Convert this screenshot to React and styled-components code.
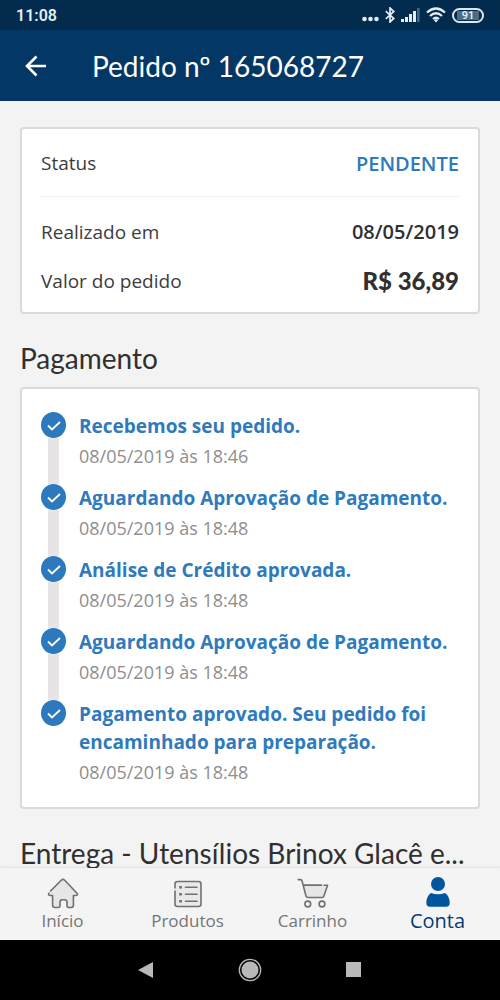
import React, { useState } from 'react';
import styled, { createGlobalStyle } from 'styled-components';

const GlobalStyle = createGlobalStyle`
  * {
    box-sizing: border-box;
  }
  body {
    margin: 0;
    background: #f3f3f3;
    color: #3c3c3c;
    font-family: 'Open Sans', 'Noto Sans', sans-serif;
  }
  h1, h2, p, ol, dl, dd {
    margin: 0;
    padding: 0;
  }
  button {
    border: 0;
    padding: 0;
    background: none;
    display: flex;
    cursor: pointer;
  }
  svg {
    display: block;
  }
`;
const Screen = styled.div`
  display: flex;
  flex-direction: column;
  height: 100vh;
`;
const StatusBar = styled.div`
  display: flex;
  align-items: center;
  justify-content: space-between;
  height: 30px;
  padding: 0 16px;
  background: #022b4d;
  color: #e4edf5;
  font-family: Roboto, sans-serif;
  font-size: 16px;
  font-weight: 600;
`;
const StatusIcons = styled.div`
  display: flex;
  align-items: center;
  gap: 6px;
`;
const Battery = styled.div`
  display: flex;
  width: 32px;
  height: 15px;
  padding: 1px;
  border: 2px solid #dbe6ef;
  border-radius: 8px;
  span {
    flex: 1;
    margin: 0 2px;
    background: #4f6c85;
    font-size: 11px;
    line-height: 10px;
    text-align: center;
  }
`;
const Header = styled.header`
  display: flex;
  align-items: center;
  gap: 44px;
  height: 71px;
  padding: 0 24px;
  background: #033866;
  color: #fff;
  flex-shrink: 0;
`;
const Title = styled.h1`
  font-family: Lato, sans-serif;
  font-size: 28px;
  line-height: 40px;
  font-weight: 400;
`;
const Content = styled.main`
  flex: 1;
  min-height: 0;
  padding: 26px 20px 0;
  overflow-y: auto;
  scrollbar-width: none;
`;
const Card = styled.section`
  padding: 23px 19px 22px;
  background: #fff;
  border: 2px solid #dadada;
  border-radius: 4px;
`;
const Summary = styled(Card)`
  padding: 9px 19px 7px;
`;
const Row = styled.div`
  display: flex;
  align-items: center;
  justify-content: space-between;
  height: 49px;
  font-size: 19px;
`;
const StatusRow = styled(Row)`
  height: 59px;
  padding-bottom: 8px;
  margin-bottom: 10px;
  border-bottom: 1px solid #eee;
`;
const Value = styled.dd`
  color: #303030;
  font-size: 20px;
  font-weight: 600;
`;
const StatusValue = styled(Value)`
  color: #2e7abd;
`;
const Price = styled(Value)`
  font-family: Lato, sans-serif;
  font-size: 24px;
  font-weight: 900;
`;
const SectionTitle = styled.h2`
  padding: 24px 0 9px;
  overflow: hidden;
  color: #303030;
  font-family: Lato, sans-serif;
  font-size: 28px;
  line-height: 40px;
  font-weight: 400;
  white-space: nowrap;
  text-overflow: ellipsis;
`;
const Steps = styled.ol`
  list-style: none;
`;
const Step = styled.li`
  display: flex;
  gap: 13px;
`;
const Marker = styled.div`
  display: flex;
  flex-direction: column;
  align-items: center;
  flex-shrink: 0;
  width: 25px;
`;
const Dot = styled.span`
  display: flex;
  align-items: center;
  justify-content: center;
  width: 25px;
  height: 26px;
  border-radius: 50%;
  background: #2c79be;
`;
const Line = styled.span`
  flex: 1;
  width: 11px;
  background: #e6e4e4;
`;
const StepText = styled.div`
  padding-bottom: ${props => (props.$last ? '0' : '15px')};
`;
const StepTitle = styled.p`
  color: #2e7abd;
  font-size: 19px;
  line-height: 28px;
  font-weight: 700;
`;
const StepDate = styled.p`
  margin-top: 3px;
  color: #8e8e8e;
  font-size: 18px;
  line-height: 26px;
`;
const Tabs = styled.nav`
  display: grid;
  grid-template-columns: repeat(4, 1fr);
  height: 72px;
  flex-shrink: 0;
  background: #f4f4f4;
  box-shadow: 0 -1px 2px rgba(0, 0, 0, 0.08);
`;
const Tab = styled.a`
  display: flex;
  flex-direction: column;
  align-items: center;
  justify-content: flex-end;
  padding-bottom: 7px;
  color: ${props => (props.$active ? '#033c72' : '#757575')};
  font-size: ${props => (props.$active ? '20px' : '17px')};
  line-height: 24px;
  text-decoration: none;
`;
const SystemBar = styled.div`
  display: flex;
  align-items: center;
  justify-content: center;
  gap: 84px;
  height: 60px;
  flex-shrink: 0;
  background: #000;
`;

const HomeIcon = () => (
  <svg width='32' height='32' viewBox='0 0 32 32' fill='#e6e6e6' stroke='#707070' strokeWidth='1.6' strokeLinecap='round' strokeLinejoin='round'>
    <path d='M3.500 14 14.500 3q1.500-1.400 3 0L30 16.200q1.400 2-1 2.300h-2.600v9.800q0 2.200-2.200 2.200h-2.400q-1.800 0-1.800-2v-3.300q0-2.400-2.400-2.400h-2.200q-2.400 0-2.400 2.400v3.300q0 2-1.800 2H7.800q-2.200 0-2.200-2.200v-9.800H3q-2.400-.3-1-2.300' />
  </svg>
);
const ListIcon = () => (
  <svg width='32' height='32' viewBox='0 0 32 32' fill='none' stroke='#707070' strokeWidth='1.6' strokeLinecap='round'>
    <path fill='#e9e9e9' d='M3 11V7q0-2.500 2.500-2.500h21Q29 4.500 29 7v20q0 2.500-2.500 2.500h-21Q3 29.500 3 27V14' />
    <path d='M13.500 10.200H25M13.500 17.200H25M13.500 24.200H25' />
    <path strokeWidth='2.600' strokeLinecap='square' d='M8.500 10.200h.1M8.500 17.200h.1M8.500 24.200h.1' />
  </svg>
);
const CartIcon = () => (
  <svg width='32' height='32' viewBox='0 0 32 32' fill='none' stroke='#707070' strokeWidth='1.6' strokeLinecap='round' strokeLinejoin='round'>
    <path fill='#e6e6e6' stroke='none' d='M6 8h24l-3.500 12H9z' />
    <path d='M1.200 2.600h2.300q1.200 0 1.500 1.200l4 15.200q.4 1.500 2 1.500h14.300q1.200 0 1.500-1.200l3.800-11.100h-3.500M6.500 8.100h18' />
    <circle cx='10.800' cy='27' r='2.900' />
    <circle cx='25' cy='27' r='2.900' />
  </svg>
);
const UserIcon = () => (
  <svg width='32' height='32' viewBox='0 0 32 32' fill='#02549f'>
    <circle cx='16' cy='7' r='7' />
    <path d='M9 15.900q7 2.700 14 0 4.700 3.300 4.700 10.100 0 3.700-3.500 3.700H7.800q-3.500 0-3.500-3.700 0-6.800 4.700-10.100' />
  </svg>
);

const steps = [
  { title: 'Recebemos seu pedido.', date: '08/05/2019 às 18:46' },
  { title: 'Aguardando Aprovação de Pagamento.', date: '08/05/2019 às 18:48' },
  { title: 'Análise de Crédito aprovada.', date: '08/05/2019 às 18:48' },
  { title: 'Aguardando Aprovação de Pagamento.', date: '08/05/2019 às 18:48' },
  { title: 'Pagamento aprovado. Seu pedido foi encaminhado para preparação.', date: '08/05/2019 às 18:48' },
];
const tabs = [
  { id: 'inicio', label: 'Início', Icon: HomeIcon },
  { id: 'produtos', label: 'Produtos', Icon: ListIcon },
  { id: 'carrinho', label: 'Carrinho', Icon: CartIcon },
  { id: 'conta', label: 'Conta', Icon: UserIcon },
];

const App = () => {
  const [activeTab, setActiveTab] = useState('conta');
  return (
    <Screen>
      <GlobalStyle />
      <StatusBar>
        <span>11:08</span>
        <StatusIcons>
          <svg width='17' height='16' viewBox='0 0 17 16' fill='#e4edf5'>
            <circle cx='2.500' cy='12' r='2.300' />
            <circle cx='8.500' cy='12' r='2.300' />
            <circle cx='14.500' cy='12' r='2.300' />
          </svg>
          <svg width='10' height='16' viewBox='0 0 10 16' fill='none' stroke='#e4edf5' strokeWidth='1.700'>
            <path d='M.8 4.200 8.800 11.500 5 15V1l3.800 3.500-8 7.300' />
          </svg>
          <svg width='19' height='14' viewBox='0 0 19 14' fill='#e4edf5'>
            <path d='M0 11h3v3H0zM4 9h3v5H4zM8 6h3v8H8zM12 3h3v11h-3z' />
            <path fill='#47667f' d='M16 0h2.600v14H16z' />
          </svg>
          <svg width='20' height='16' viewBox='0 0 20 16' fill='none' stroke='#e4edf5' strokeWidth='2.300'>
            <path d='M1 5.500q9-8 18 0M4 9q6-5.400 12 0M7 12q3-2.600 6 0' />
            <path fill='#e4edf5' stroke='none' d='m7.800 13 2.200 2.500 2.200-2.500q-2.200-1.600-4.400 0' />
          </svg>
          <Battery>
            <span>91</span>
          </Battery>
        </StatusIcons>
      </StatusBar>
      <Header>
        <button aria-label='Voltar'>
          <svg width='24' height='24' viewBox='0 0 24 24' fill='none' stroke='#fff' strokeWidth='2.600'>
            <path d='M22 12H3.500M12.500 2.500 3 12l9.500 9.500' />
          </svg>
        </button>
        <Title>Pedido nº 165068727</Title>
      </Header>
      <Content>
        <Summary as='dl'>
          <StatusRow>
            <dt>Status</dt>
            <StatusValue>PENDENTE</StatusValue>
          </StatusRow>
          <Row>
            <dt>Realizado em</dt>
            <Value>08/05/2019</Value>
          </Row>
          <Row>
            <dt>Valor do pedido</dt>
            <Price>R$ 36,89</Price>
          </Row>
        </Summary>
        <SectionTitle>Pagamento</SectionTitle>
        <Card>
          <Steps>
            {steps.map((step, i) => (
              <Step key={i}>
                <Marker>
                  <Dot>
                    <svg width='14' height='12' viewBox='0 0 14 12' fill='none' stroke='#fff' strokeWidth='1.800'>
                      <path d='m1 6.500 4 4L13 3' />
                    </svg>
                  </Dot>
                  {i < steps.length - 1 && <Line />}
                </Marker>
                <StepText $last={i === steps.length - 1}>
                  <StepTitle>{step.title}</StepTitle>
                  <StepDate>{step.date}</StepDate>
                </StepText>
              </Step>
            ))}
          </Steps>
        </Card>
        <SectionTitle>Entrega - Utensílios Brinox Glacê e...</SectionTitle>
      </Content>
      <Tabs>
        {tabs.map(({ id, label, Icon }) => (
          <Tab key={id} href={`#${id}`} $active={activeTab === id} onClick={() => setActiveTab(id)}>
            <Icon />
            {label}
          </Tab>
        ))}
      </Tabs>
      <SystemBar>
        <button aria-label='Voltar'>
          <svg width='16' height='18' viewBox='0 0 16 18' fill='#b9b9b9'>
            <path d='M0 9 15 1v16z' />
          </svg>
        </button>
        <button aria-label='Tela inicial'>
          <svg width='24' height='24' viewBox='0 0 24 24' fill='#b9b9b9'>
            <circle cx='12' cy='12' r='8.500' />
            <circle cx='12' cy='12' r='10.700' fill='none' stroke='#b9b9b9' strokeWidth='1.300' />
          </svg>
        </button>
        <button aria-label='Recentes'>
          <svg width='16' height='16' viewBox='0 0 16 16' fill='#b9b9b9'>
            <path d='M0 0h15v15H0z' />
          </svg>
        </button>
      </SystemBar>
    </Screen>
  );
};

export default App;
